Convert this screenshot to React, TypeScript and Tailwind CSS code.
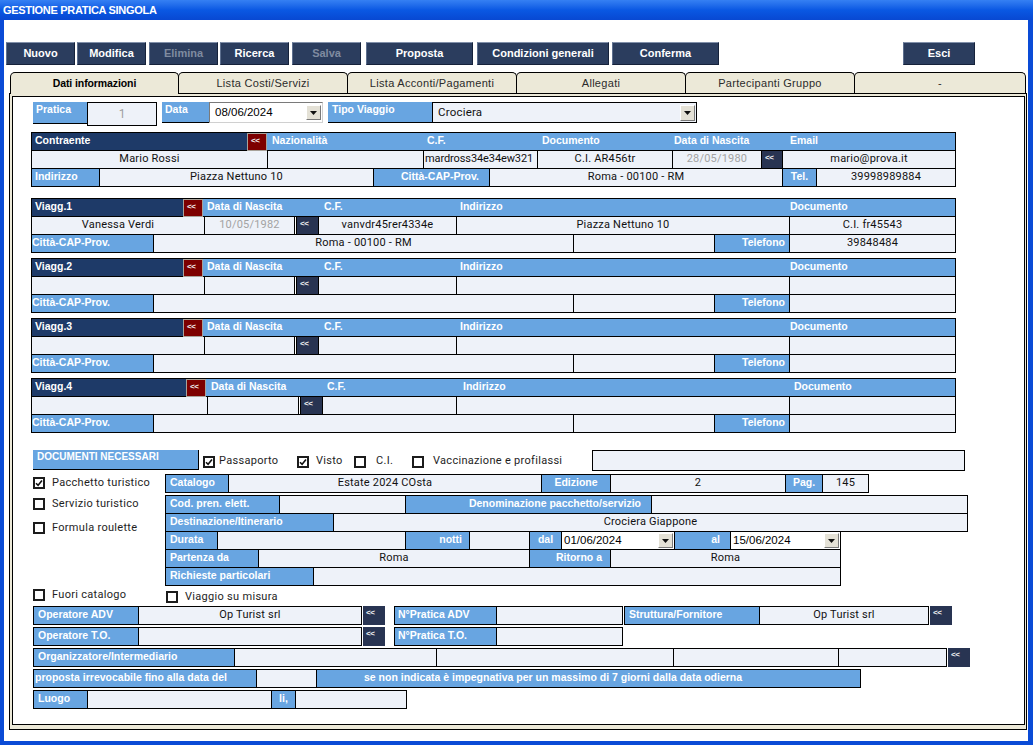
import type { ReactNode } from 'react'
import clsx from 'clsx'

// base classes
const LBL = "flex shrink-0 items-start overflow-hidden whitespace-nowrap font-['Liberation_Sans',Arial,sans-serif] font-bold leading-[14px] text-white"
const VAL = "flex h-full shrink-0 items-center overflow-hidden whitespace-nowrap border-b border-r border-black font-['Roboto',Arial,sans-serif] text-[11px] tracking-[0.2px]"

type P = { c?: string; p?: string; children?: ReactNode }

// etichetta azzurra dentro una griglia
function L({ c, p = 'pl-[3px]', children }: P) {
  return <div className={clsx(LBL, 'h-full border-b border-r border-black bg-[#68a5e1] text-[10.5px]', p, c)}>{children}</div>
}

// etichetta azzurra di intestazione (senza separatore a destra)
function H({ c, p = 'pl-[4px]', children }: P) {
  return <div className={clsx(LBL, 'h-full border-b border-black bg-[#68a5e1] text-[10.5px]', p, c)}>{children}</div>
}

function Head({ c, children }: P) {
  return <div className={clsx(LBL, 'h-full border-b border-black bg-[#1e3a68] pl-[3px] text-[10.5px]', c)}>{children}</div>
}

function V({ c, p = 'justify-center', muted, children }: P & { muted?: boolean }) {
  return <div className={clsx(VAL, muted ? 'text-[#a3a3a3]' : 'text-[#111]', 'bg-[#eef2f9]', p, c)}>{children}</div>
}

function Chev() {
  return (
    <span className="font-['Liberation_Sans',Arial,sans-serif] text-[8px] font-bold leading-[8px] tracking-[-0.5px] text-[#f2f2f2]">
      &lt;&lt;
    </span>
  )
}

function Red({ c }: { c?: string }) {
  return (
    <div className={clsx('flex h-full shrink-0 items-start border border-[#a8a29a] bg-[#7d0000] pl-[3px] pt-[3px]', c)}>
      <Chev />
    </div>
  )
}

function Nav({ c }: { c?: string }) {
  return (
    <div className={clsx('flex shrink-0 items-start bg-[#283452] pl-[3px] pt-[3px]', c)}>
      <Chev />
    </div>
  )
}

function Drop({ c }: { c?: string }) {
  return (
    <span className={clsx('flex h-[15px] w-[15px] shrink-0 items-center justify-center border border-b-[#7a7a7a] border-l-white border-r-[#7a7a7a] border-t-white bg-[#e4e1d6]', c)}>
      <svg width="7" height="4" viewBox="0 0 7 4">
        <path d="M0 0h7L3.5 4z" fill="#111" />
      </svg>
    </span>
  )
}

function DateCell({ c, v }: { c: string; v: string }) {
  return (
    <div className={clsx('flex h-full shrink-0 items-center border-b border-r border-black bg-white pl-[2px]', c)}>
      <span className="font-['Liberation_Sans',Arial,sans-serif] text-[11.5px] text-black">{v}</span>
      <Drop c="ml-auto mr-[1px] h-[14px]" />
    </div>
  )
}

function Box({ on }: { on?: boolean }) {
  return (
    <span className="flex h-[12px] w-[12px] shrink-0 items-center justify-center border-2 border-[#1c1c1c] bg-white">
      {on && (
        <svg width="8" height="8" viewBox="0 0 8 8">
          <path d="M1 4.2 L3.1 6.3 L7 1.6" stroke="#111" strokeWidth="1.6" fill="none" />
        </svg>
      )}
    </span>
  )
}

function Chk({ on, c, t, children }: { on?: boolean; c?: string; t: string; children: ReactNode }) {
  return (
    <div className={clsx('flex shrink-0 items-center', c)}>
      <Box on={on} />
      <span className={clsx("whitespace-nowrap font-['Roboto',Arial,sans-serif] text-[11px] tracking-[0.3px] text-[#1e1e1e]", t)}>{children}</span>
    </div>
  )
}

// blocco di una sola riga
function Blk({ c, children }: { c: string; children: ReactNode }) {
  return (
    <div className={clsx('shrink-0 border-l border-t border-black', c)}>
      <div className="flex h-[18px]">{children}</div>
    </div>
  )
}

function Btn({ c, off, children }: { c: string; off?: boolean; children: ReactNode }) {
  return (
    <div
      className={clsx(
        "flex h-[23px] shrink-0 items-center justify-center border border-b-[#16223a] border-l-[#5d6f8e] border-r-[#16223a] border-t-[#8190aa] bg-[#2b3d5e] font-['Liberation_Sans',Arial,sans-serif] text-[11px] font-bold",
        off ? 'text-[#7f8ba0]' : 'text-white',
        c,
      )}
    >
      {children}
    </div>
  )
}

type Pax = { n: string; nome?: string; nascita?: string; cf?: string; ind?: string; doc?: string; citta?: string; tel?: string }

const viaggiatori: Pax[] = [
  { n: 'Viagg.1', nome: 'Vanessa Verdi', nascita: '10/05/1982', cf: 'vanvdr45rer4334e', ind: 'Piazza Nettuno 10', doc: 'C.I. fr45543', citta: 'Roma - 00100 - RM', tel: '39848484' },
  { n: 'Viagg.2' },
  { n: 'Viagg.3' },
]

function Viagg({ p, shift, c }: { p: Pax; shift?: boolean; c: string }) {
  return (
    <div className={clsx('ml-[18px] w-[925px] shrink-0 border-l border-t border-black', c)}>
      <div className="flex h-[18px]">
        <Head c={shift ? 'w-[154px]' : 'w-[151px]'}>{p.n}</Head>
        <Red c="w-[20px]" />
        <H c="w-[117px]" p={shift ? 'pl-[5px]' : 'pl-[4px]'}>Data di Nascita</H>
        <H c="w-[136px]">C.F.</H>
        <H c={shift ? 'w-[330px]' : 'w-[333px]'}>Indirizzo</H>
        <H c="w-[167px] border-r" p={shift ? 'pl-[5px]' : 'pl-[1px]'}>Documento</H>
      </div>
      <div className="flex h-[18px]">
        <V c={shift ? 'w-[176px]' : 'w-[173px]'}>{p.nome}</V>
        <V c={shift ? 'w-[91px]' : 'w-[90px]'} muted>{p.nascita}</V>
        <div className="flex h-full w-[24px] shrink-0 border-b border-r border-black">
          <div className="w-[2px] border-r border-black bg-white" />
          <Nav c="h-full w-[21px]" />
        </div>
        <V c={shift ? 'w-[134px]' : 'w-[138px]'}>{p.cf}</V>
        <V c="w-[333px]">{p.ind}</V>
        <V c="w-[166px]">{p.doc}</V>
      </div>
      <div className="flex h-[18px]">
        <L c="w-[122px]" p="pl-0">Città-CAP-Prov.</L>
        <V c="w-[420px]">{p.citta}</V>
        <V c="w-[141px]" />
        <L c="w-[75px]" p="justify-end pr-[4px]">Telefono</L>
        <V c="w-[166px]">{p.tel}</V>
      </div>
    </div>
  )
}

const tabs = [
  { t: 'Lista Costi/Servizi', c: 'w-[170px]' },
  { t: 'Lista Acconti/Pagamenti', c: 'w-[170px]' },
  { t: 'Allegati', c: 'w-[170px]' },
  { t: 'Partecipanti Gruppo', c: 'w-[170px]' },
  { t: '-', c: 'w-[172px]' },
]

export default function App() {
  return (
    <div className="flex h-[745px] w-[1033px] flex-col overflow-hidden bg-[#0a4bd6]">
      {/* barra del titolo */}
      <div className="flex h-[20px] shrink-0 items-center bg-linear-to-b from-[#3580f3] via-[#0a58e3] to-[#0848d2] pl-[3px] font-['Liberation_Sans',Arial,sans-serif] text-[11px] font-bold tracking-[-0.3px] text-white">
        GESTIONE PRATICA SINGOLA
      </div>

      <div className="mb-[4px] ml-[4px] mr-[5px] flex flex-1 flex-col bg-white">
        {/* pulsanti */}
        <div className="mt-[22px] flex h-[23px]">
          <Btn c="ml-[2px] w-[69px]">Nuovo</Btn>
          <Btn c="ml-[2px] w-[69px]">Modifica</Btn>
          <Btn c="ml-[3px] w-[69px]" off>Elimina</Btn>
          <Btn c="ml-[2px] w-[69px]">Ricerca</Btn>
          <Btn c="ml-[3px] w-[69px]" off>Salva</Btn>
          <Btn c="ml-[5px] w-[107px]">Proposta</Btn>
          <Btn c="ml-[4px] w-[132px]">Condizioni generali</Btn>
          <Btn c="ml-[3px] w-[107px]">Conferma</Btn>
          <Btn c="ml-[184px] w-[72px]">Esci</Btn>
        </div>

        {/* schede */}
        <div className="ml-[6px] mt-[7px] flex h-[21px] items-start">
          <div className="relative z-10 flex h-[22px] w-[169px] shrink-0 items-center justify-center rounded-t-[5px] border-l border-r border-t border-black bg-[#ece9d8] font-['Liberation_Sans',Arial,sans-serif] text-[10.5px] font-bold tracking-[-0.1px] text-black">
            Dati informazioni
          </div>
          {tabs.map((tb) => (
            <div
              key={tb.t}
              className={clsx(
                "-ml-px flex h-[21px] shrink-0 items-center justify-center rounded-t-[5px] border-l border-r border-t border-black bg-[#ece9d8] font-['Liberation_Sans',Arial,sans-serif] text-[11px] tracking-[0.3px] text-[#2b2b2b]",
                tb.c,
              )}
            >
              {tb.t}
            </div>
          ))}
        </div>

        {/* pannello */}
        <div className="ml-[5px] flex h-[637px] w-[1018px] shrink-0 flex-col border border-black bg-[#ece9d8] pb-[4px] pl-[2px] pr-[1px] pt-[2px]">
          <div className="flex flex-1 flex-col border border-black bg-white">
            {/* pratica / data / tipo viaggio */}
            <div className="ml-[20px] mt-[5px] flex h-[24px] shrink-0 items-start">
              <div className={clsx(LBL, 'h-[22px] w-[54px] border-b border-black bg-[#68a5e1] pl-[3px] text-[10.5px]')}>Pratica</div>
              <div className="flex h-[24px] w-[70px] items-center justify-center border border-black bg-[#eef2f9] font-['Roboto',Arial,sans-serif] text-[12px] text-[#a0a0a0]">
                1
              </div>
              <div className={clsx(LBL, 'ml-[5px] h-[21px] w-[47px] border-b border-black bg-[#68a5e1] pl-[3px] text-[10.5px]')}>Data</div>
              <div className="flex h-[21px] w-[114px] items-center border border-b-[#d0d0d0] border-l-[#7a7a7a] border-r-[#d0d0d0] border-t-[#7a7a7a] bg-white pl-[5px]">
                <span className="font-['Liberation_Sans',Arial,sans-serif] text-[11.5px] text-black">08/06/2024</span>
                <Drop c="ml-auto mr-[1px]" />
              </div>
              <div className={clsx(LBL, 'ml-[5px] h-[21px] w-[104px] border-b border-black bg-[#68a5e1] pl-[4px] text-[10.5px]')}>Tipo Viaggio</div>
              <div className="flex h-[21px] w-[265px] items-center border border-black bg-[#eef2f9] pl-[5px]">
                <span className="font-['Roboto',Arial,sans-serif] text-[11.5px] tracking-[0.2px] text-[#111]">Crociera</span>
                <Drop c="ml-auto mr-[1px] h-[16px] w-[13px]" />
              </div>
            </div>

            {/* contraente */}
            <div className="ml-[18px] mt-[6px] w-[925px] shrink-0 border-l border-t border-black">
              <div className="flex h-[18px]">
                <Head c="w-[215px]">Contraente</Head>
                <Red c="w-[20px]" />
                <H c="w-[156px]" p="pl-[5px]">Nazionalità</H>
                <H c="w-[115px]">C.F.</H>
                <H c="w-[135px]">Documento</H>
                <H c="w-[109px]" p="pl-[1px]">Data di Nascita</H>
                <H c="w-[174px] border-r" p="pl-[8px]">Email</H>
              </div>
              <div className="flex h-[18px]">
                <V c="w-[236px]">Mario Rossi</V>
                <V c="w-[156px]" />
                <V c="w-[114px]" p="justify-start pl-[1px]">
                  <span className="tracking-[-0.1px]">mardross34e34ew321</span>
                </V>
                <V c="w-[135px]">C.I. AR456tr</V>
                <V c="w-[89px]" muted>28/05/1980</V>
                <Nav c="h-full w-[21px] border-b border-r border-black" />
                <V c="w-[173px]">mario@prova.it</V>
              </div>
              <div className="flex h-[18px]">
                <L c="w-[68px]">Indirizzo</L>
                <V c="w-[274px]">Piazza Nettuno 10</V>
                <L c="w-[116px]" p="justify-end pr-[10px]">Città-CAP-Prov.</L>
                <V c="w-[293px]">Roma - 00100 - RM</V>
                <L c="w-[34px]" p="justify-center">Tel.</L>
                <V c="w-[139px]">39998989884</V>
              </div>
            </div>

            {/* viaggiatori */}
            <Viagg p={viaggiatori[0]} c="mt-[11px]" />
            <Viagg p={viaggiatori[1]} c="mt-[5px]" />
            <Viagg p={viaggiatori[2]} c="mt-[5px]" />
            <Viagg p={{ n: 'Viagg.4' }} shift c="mt-[5px]" />

            {/* documenti necessari */}
            <div className="ml-[20px] mt-[17px] flex h-[21px] shrink-0 items-start">
              <div className={clsx(LBL, 'h-[20px] w-[166px] border-b border-r border-black bg-[#68a5e1] pl-[4px] text-[10px]')}>DOCUMENTI NECESSARI</div>
              <Chk on c="ml-[4px] h-full w-[94px] pt-[2px]" t="ml-[4px]">Passaporto</Chk>
              <Chk on c="h-full w-[57px] pt-[2px]" t="ml-[7px]">Visto</Chk>
              <Chk c="h-full w-[58px] pt-[2px]" t="ml-[10px]">C.I.</Chk>
              <Chk c="h-full w-[180px] pt-[2px]" t="ml-[9px]">Vaccinazione e profilassi</Chk>
              <div className="h-[21px] w-[373px] border border-black bg-[#eef2f9]" />
            </div>

            {/* catalogo */}
            <div className="mt-[3px] flex shrink-0">
              <div className="ml-[20px] flex w-[132px] shrink-0 flex-col">
                <Chk on c="mt-[3px] h-[12px]" t="ml-[7px]">Pacchetto turistico</Chk>
                <Chk c="mt-[9px] h-[12px]" t="ml-[7px]">Servizio turistico</Chk>
                <Chk c="mt-[12px] h-[12px]" t="ml-[7px]">Formula roulette</Chk>
              </div>
              <div className="flex flex-col">
                <Blk c="w-[704px]">
                  <L c="w-[63px]" p="pl-[4px]">Catalogo</L>
                  <V c="w-[313px]">Estate 2024 COsta</V>
                  <L c="w-[69px]" p="justify-center">Edizione</L>
                  <V c="w-[175px]">2</V>
                  <L c="w-[37px]" p="justify-center">Pag.</L>
                  <V c="w-[46px]">145</V>
                </Blk>
                <div className="mt-[2px] w-[803px] border-l border-t border-black">
                  <div className="flex h-[18px]">
                    <L c="w-[114px]" p="pl-[4px]">Cod. pren. elett.</L>
                    <V c="w-[126px]" />
                    <L c="w-[246px]" p="justify-end pr-[10px]">Denominazione pacchetto/servizio</L>
                    <V c="w-[316px]" />
                  </div>
                  <div className="flex h-[18px]">
                    <L c="w-[168px]" p="pl-[4px]">Destinazione/Itinerario</L>
                    <V c="w-[634px]">Crociera Giappone</V>
                  </div>
                  <div className="flex h-[18px]">
                    <L c="w-[52px]" p="pl-[4px]">Durata</L>
                    <V c="w-[188px]" />
                    <L c="w-[64px]" p="justify-end pr-[7px]">notti</L>
                    <V c="w-[60px]" />
                    <L c="w-[32px]" p="justify-center">dal</L>
                    <DateCell c="w-[113px]" v="01/06/2024" />
                    <L c="w-[56px]" p="justify-end pr-[10px]">al</L>
                    <DateCell c="w-[110px]" v="15/06/2024" />
                  </div>
                  <div className="flex h-[18px]">
                    <L c="w-[93px]" p="pl-[4px]">Partenza da</L>
                    <V c="w-[271px]">Roma</V>
                    <L c="w-[81px]" p="justify-end pr-[8px]">Ritorno a</L>
                    <V c="w-[230px]">Roma</V>
                  </div>
                  <div className="flex h-[18px]">
                    <L c="w-[148px]" p="pl-[4px]">Richieste particolari</L>
                    <V c="w-[527px]" />
                  </div>
                </div>
              </div>
            </div>

            {/* fuori catalogo */}
            <div className="ml-[20px] mt-[3px] flex h-[14px] shrink-0">
              <Chk c="h-[12px] w-[133px] self-start" t="ml-[7px]">Fuori catalogo</Chk>
              <Chk c="h-[12px] self-end" t="ml-[7px]">Viaggio su misura</Chk>
            </div>

            {/* operatori */}
            <div className="ml-[20px] mt-[3px] flex h-[19px] shrink-0">
              <Blk c="w-[329px]">
                <L c="w-[105px]" p="pl-[4px]">Operatore ADV</L>
                <V c="w-[223px]">Op Turist srl</V>
              </Blk>
              <Nav c="ml-[1px] h-[19px] w-[22px]" />
              <Blk c="ml-[9px] w-[229px]">
                <L c="w-[102px]">N°Pratica ADV</L>
                <V c="w-[126px]" />
              </Blk>
              <Blk c="ml-[1px] w-[305px]">
                <L c="w-[135px]" p="pl-[4px]">Struttura/Fornitore</L>
                <V c="w-[169px]">Op Turist srl</V>
              </Blk>
              <Nav c="ml-[1px] h-[19px] w-[22px]" />
            </div>
            <div className="ml-[20px] mt-[2px] flex h-[19px] shrink-0">
              <Blk c="w-[329px]">
                <L c="w-[105px]" p="pl-[4px]">Operatore T.O.</L>
                <V c="w-[223px]" />
              </Blk>
              <Nav c="ml-[1px] h-[19px] w-[22px]" />
              <Blk c="ml-[9px] w-[229px]">
                <L c="w-[102px]">N°Pratica T.O.</L>
                <V c="w-[126px]" />
              </Blk>
            </div>
            <div className="ml-[20px] mt-[2px] flex h-[19px] shrink-0">
              <Blk c="w-[914px]">
                <L c="w-[201px]" p="pl-[4px]">Organizzatore/Intermediario</L>
                <V c="w-[202px]" />
                <V c="w-[237px]" />
                <V c="w-[165px]" />
                <V c="w-[108px]" />
              </Blk>
              <Nav c="ml-[1px] h-[19px] w-[22px]" />
            </div>
            <div className="ml-[20px] mt-[2px] flex h-[19px] shrink-0">
              <Blk c="w-[828px]">
                <L c="w-[223px]" p="pl-[1px]">proposta irrevocabile fino alla data del</L>
                <V c="w-[60px]" />
                <L c="w-[544px]" p="pl-[47px]">se non indicata è impegnativa per un massimo di 7 giorni dalla data odierna</L>
              </Blk>
            </div>
            <div className="ml-[20px] mt-[2px] flex h-[19px] shrink-0">
              <Blk c="w-[374px]">
                <L c="w-[54px]" p="pl-[4px]">Luogo</L>
                <V c="w-[184px]" />
                <L c="w-[24px]" p="justify-center">li,</L>
                <V c="w-[111px]" />
              </Blk>
            </div>
          </div>
        </div>
      </div>
    </div>
  )
}
